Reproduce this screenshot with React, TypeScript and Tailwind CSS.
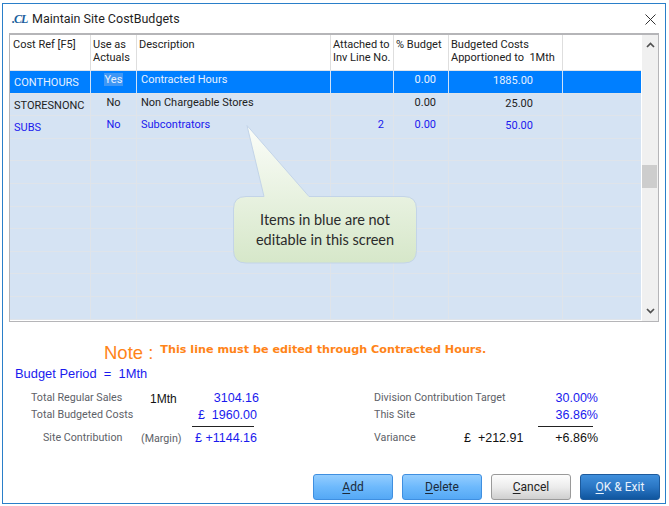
const cols = ["w-[81px]", "w-[46px]", "w-[194px]", "w-[63px]", "w-[55px]", "w-[114px]", "w-[78px]"];

const rows = [
  { ref: "CONTHOURS", actual: "Yes", desc: "Contracted Hours", inv: "", pct: "0.00", cost: "1885.00", tone: "selected" },
  { ref: "STORESNONC", actual: "No", desc: "Non Chargeable Stores", inv: "", pct: "0.00", cost: "25.00", tone: "plain" },
  { ref: "SUBS", actual: "No", desc: "Subcontrators", inv: "2", pct: "0.00", cost: "50.00", tone: "blue" },
  ...Array.from({ length: 8 }, () => ({ ref: "", actual: "", desc: "", inv: "", pct: "", cost: "", tone: "plain" })),
];

function GridRow({ row }: { row: (typeof rows)[number] }) {
  const selected = row.tone === "selected";
  const color = selected ? "text-[#e6f1ff]" : row.tone === "blue" ? "text-[#1a1aee]" : "text-[#222222]";
  const bg = selected ? "bg-[#007fff]" : "bg-[#d5e3f3]";
  const line = selected ? "border-[#cfe2f8]" : "border-[#dfe4ea]";
  return (
    <div className={`flex h-[22.6px] ${bg} ${color} border-b border-[#dfe4ea] text-[11px] leading-[14px]`}>
      <div className={`${cols[0]} border-r ${line} pl-[4px] pt-[5px]`}>{row.ref}</div>
      <div className={`${cols[1]} border-r ${line} pt-[2px] text-center`}>
        {row.actual && <span className={selected ? "bg-[#3f97f5] px-[1px]" : ""}>{row.actual}</span>}
      </div>
      <div className={`${cols[2]} border-r ${line} pl-[4px] pt-[2px]`}>{row.desc}</div>
      <div className={`${cols[3]} border-r ${line} pr-[9px] pt-[2px] text-right`}>{row.inv}</div>
      <div className={`${cols[4]} border-r ${line} pr-[12px] pt-[2px] text-right`}>{row.pct}</div>
      <div className={`${cols[5]} border-r ${line} pr-[29px] pt-[3px] text-right`}>{row.cost}</div>
      <div className={cols[6]} />
    </div>
  );
}

function Callout() {
  return (
    <div className="absolute left-[222px] top-[90px] h-[140px] w-[186px]">
      <svg className="absolute left-0 top-0" width="186" height="140" viewBox="0 0 186 140">
        <defs>
          <linearGradient id="callout" x1="0" y1="0" x2="0" y2="1">
            <stop offset="0" stopColor="#fbfdf9" />
            <stop offset="1" stopColor="#d6e7c9" />
          </linearGradient>
        </defs>
        <path
          d="M15 0.5 L32 71.5 L14 71.5 Q1.5 71.5 1.5 84 L1.5 125.5 Q1.5 138 14 138 L172 138 Q184.5 138 184.5 125.5 L184.5 84 Q184.5 71.5 172 71.5 L77 71.5 Z"
          fill="url(#callout)"
          stroke="#c3d4e8"
          strokeWidth="1"
        />
      </svg>
      <div className="absolute left-0 right-0 top-[85px] text-center font-['Lato',sans-serif] text-[14.5px] leading-[20px] text-[#2b2b2b]">
        Items in blue are not
        <br />
        editable in this screen
      </div>
    </div>
  );
}

function Chevron({ up }: { up?: boolean }) {
  return (
    <svg width="9" height="6" viewBox="0 0 9 6">
      <path d={up ? "M1 5 L4.5 1.5 L8 5" : "M1 1 L4.5 4.5 L8 1"} fill="none" stroke="#505050" strokeWidth="1.7" />
    </svg>
  );
}

function DialogButton({ label, rest, tone }: { label: string; rest: string; tone: "blue" | "grey" | "dark" }) {
  const toneClass =
    tone === "blue"
      ? "border-[#3f8fe0] bg-gradient-to-b from-[#93cdff] via-[#6db9fc] to-[#54a8f5] text-[#1c2a3a]"
      : tone === "grey"
        ? "border-[#9a9a9a] bg-gradient-to-b from-[#fdfdfd] via-[#ececec] to-[#cfcfcf] text-[#222222]"
        : "border-[#1d5a9c] bg-gradient-to-b from-[#3f8fdc] via-[#2a76c4] to-[#0f569f] text-[#e8f2fc]";
  return (
    <button className={`h-[26px] w-[80px] rounded-[3px] border ${toneClass} font-['Roboto',sans-serif] text-[12px]`}>
      <span className="underline underline-offset-2">{label}</span>
      {rest}
    </button>
  );
}

export default function App() {
  return (
    <div className="h-[506px] w-[669px] overflow-hidden bg-white pl-[2px] pt-[3px] font-['Roboto',sans-serif]">
      <div className="flex h-[501px] w-[664px] flex-col border border-[#2a7fc9]">
        <div className="flex h-[29px] shrink-0 items-center pl-[9px] pr-[9px] pt-[1px]">
          <span className="w-[18px] font-['Liberation_Serif',serif] text-[12px] font-bold italic leading-none tracking-[-1px] text-[#1d5f9e]">
            .CL
          </span>
          <span className="ml-[2px] text-[12.5px] text-[#1f1f1f]">Maintain Site CostBudgets</span>
          <svg className="ml-auto" width="11" height="11" viewBox="0 0 11 11">
            <path d="M0.5 0.5 L10.5 10.5 M10.5 0.5 L0.5 10.5" stroke="#333333" strokeWidth="1" />
          </svg>
        </div>

        <div className="relative mx-[6px] flex h-[289px] w-[650px] shrink-0 border border-t-[2px] border-[#b5b5b8] bg-white">
          <div className="w-[631px]">
            <div className="flex h-[36px] whitespace-nowrap border-b border-[#dfe4ea] text-[11px] leading-[13px] text-[#222222]">
              <div className={`${cols[0]} border-r border-[#dedede] pl-[3px] pt-[3px]`}>Cost Ref [F5]</div>
              <div className={`${cols[1]} border-r border-[#dedede] pl-[2px] pt-[3px]`}>
                Use as
                <br />
                Actuals
              </div>
              <div className={`${cols[2]} border-r border-[#dedede] pl-[2px] pt-[3px]`}>Description</div>
              <div className={`${cols[3]} border-r border-[#dedede] pl-[2px] pt-[3px]`}>
                Attached to
                <br />
                Inv Line No.
              </div>
              <div className={`${cols[4]} border-r border-[#dedede] pl-[2px] pt-[3px]`}>% Budget</div>
              <div className={`${cols[5]} border-r border-[#dedede] pl-[2px] pt-[3px]`}>
                Budgeted Costs
                <br />
                Apportioned to&nbsp; 1Mth
              </div>
              <div className={cols[6]} />
            </div>
            {rows.map((row, i) => (
              <GridRow key={i} row={row} />
            ))}
          </div>
          <div className="ml-[1px] flex w-[16px] flex-col items-center justify-between bg-[#f0f0f0] py-[7px]">
            <Chevron up />
            <Chevron />
          </div>
          <div className="absolute left-[632px] top-[130px] h-[23px] w-[15px] bg-[#cdcdcd]" />
          <Callout />
        </div>

        <div className="mt-[20px] flex h-[22px] shrink-0 items-start pl-[101px]">
          <span className="font-['Liberation_Sans',sans-serif] text-[18.5px] leading-[22px] text-[#ff8418]">Note :</span>
          <span className="ml-[7px] font-['DejaVu_Sans',sans-serif] text-[11.2px] font-bold leading-[16px] text-[#ff8418]">
            This line must be edited through Contracted Hours.
          </span>
        </div>

        <div className="h-[20px] shrink-0 pl-[12px] font-['Liberation_Sans',sans-serif] text-[12.9px] leading-[20px] text-[#1a1aee]">
          Budget Period&nbsp; =&nbsp; 1Mth
        </div>

        <div className="mt-[6px] flex shrink-0 text-[10.7px] text-[#5d6168]">
          <div className="w-[371px] pl-[28px]">
            <div className="flex h-[17px] items-center">
              <span className="w-[119px]">Total Regular Sales</span>
              <span className="font-['Liberation_Sans',sans-serif] text-[12px] text-[#111111]">1Mth</span>
              <span className="ml-auto mr-[115px] font-['Liberation_Sans',sans-serif] text-[12.5px] text-[#1a1aee]">3104.16</span>
            </div>
            <div className="flex h-[17px] items-center">
              <span>Total Budgeted Costs</span>
              <span className="ml-auto mr-[117px] font-['Liberation_Sans',sans-serif] text-[12.5px] text-[#1a1aee]">£&nbsp; 1960.00</span>
            </div>
            <div className="ml-[161px] mt-[2px] h-px w-[62px] bg-[#222222]" />
            <div className="mt-[1px] flex h-[21px] items-center pl-[12px]">
              <span className="w-[98px]">Site Contribution</span>
              <span className="pt-[2px]">(Margin)</span>
              <span className="ml-auto mr-[117px] font-['Liberation_Sans',sans-serif] text-[12.5px] text-[#1a1aee]">£ +1144.16</span>
            </div>
          </div>
          <div className="w-[224px]">
            <div className="flex h-[17px] items-center">
              <span>Division Contribution Target</span>
              <span className="ml-auto font-['Liberation_Sans',sans-serif] text-[12.5px] text-[#1a1aee]">30.00%</span>
            </div>
            <div className="flex h-[17px] items-center">
              <span>This Site</span>
              <span className="ml-auto font-['Liberation_Sans',sans-serif] text-[12.5px] text-[#1a1aee]">36.86%</span>
            </div>
            <div className="ml-[164px] mt-[2px] h-px w-[55px] bg-[#222222]" />
            <div className="mt-[1px] flex h-[21px] items-center font-['Liberation_Sans',sans-serif]">
              <span className="w-[90px] font-['Roboto',sans-serif]">Variance</span>
              <span className="text-[12.5px] text-[#111111]">£&nbsp; +212.91</span>
              <span className="ml-auto text-[12.5px] text-[#111111]">+6.86%</span>
            </div>
          </div>
        </div>

        <div className="mt-auto mb-[3px] flex shrink-0 justify-end gap-[9px] pr-[5px]">
          <DialogButton label="A" rest="dd" tone="blue" />
          <DialogButton label="D" rest="elete" tone="blue" />
          <DialogButton label="C" rest="ancel" tone="grey" />
          <DialogButton label="O" rest="K & Exit" tone="dark" />
        </div>
      </div>
    </div>
  );
}
